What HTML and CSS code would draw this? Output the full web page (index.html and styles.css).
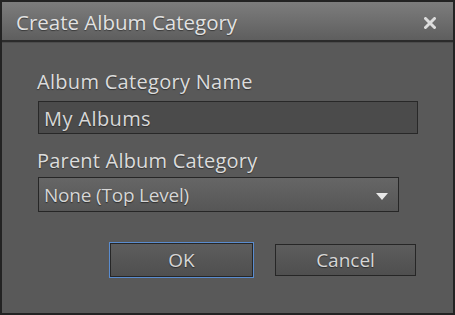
FILE: index.html
```html
<!DOCTYPE html>
<html lang="en">
<head>
    <meta charset="UTF-8">
    <meta name="viewport" content="width=device-width, initial-scale=1.0">
    <title>Create Album Category</title>
    <link rel="stylesheet" href="styles.css">
</head>
<body>
    <div class="dialog">
        <div class="titlebar">
            <span class="title">Create Album Category</span>
            <svg class="close" width="12" height="12" viewBox="0 0 12 12">
                <path d="M1.5 1.5 L10.5 10.5 M10.5 1.5 L1.5 10.5" stroke="#dcdcdc" stroke-width="3" stroke-linecap="round"/>
            </svg>
        </div>
        <div class="content">
            <label class="label" for="name">Album Category Name</label>
            <div class="field" id="name">My Albums</div>

            <label class="label label-parent" for="parent">Parent Album Category</label>
            <div class="select" id="parent">
                <span>None (Top Level)</span>
                <svg class="arrow" width="12" height="7" viewBox="0 0 12 7">
                    <path d="M0 0 L12 0 L6 7 Z" fill="#e8e8e8"/>
                </svg>
            </div>

            <div class="buttons">
                <div class="btn btn-default">OK</div>
                <div class="btn">Cancel</div>
            </div>
        </div>
    </div>
</body>
</html>
```

FILE: styles.css
```css
body {
    margin: 0;
    padding: 0;
    background-color: #1e1e1e;
    font-family: "Open Sans", "DejaVu Sans", sans-serif;
}
.dialog {
    width: 451px;
    height: 311px;
    border: 2px solid #232323;
    background-color: #595959;
    display: flex;
    flex-direction: column;
}
.titlebar {
    height: 38px;
    background: linear-gradient(#7d7d7d, #5e5e5e);
    border-bottom: 2px solid #2b2b2b;
    display: flex;
    align-items: center;
    justify-content: space-between;
    padding: 0 17px 0 14px;
}
.title {
    color: #e2e2e2;
    font-size: 20.5px;
    line-height: 24px;
    margin-top: 1px;
    text-shadow: 0 1px 1px #3a3a3a;
}
.close {
    margin-top: 3px;
}
.content {
    flex: 1;
    padding: 27px 0 0 36px;
    display: flex;
    flex-direction: column;
    border-top: 1px solid #4c4c4c;
}
.label {
    display: block;
    color: #dcdcdc;
    font-size: 20px;
    line-height: 24px;
    letter-spacing: 0.3px;
    text-shadow: 0 1px 1px #333333;
    margin-left: -1px;
}
.label-parent {
    letter-spacing: 0.2px;
}
.field {
    margin-top: 7px;
    margin-bottom: 15px;
    width: 380px;
    height: 33px;
    box-sizing: border-box;
    border: 1px solid #282828;
    background-color: #4b4b4b;
    color: #d8d8d8;
    font-size: 20px;
    letter-spacing: 0.4px;
    padding: 1px 0 0 5px;
    display: flex;
    align-items: center;
    text-shadow: 0 1px 1px #2e2e2e;
}
.select {
    margin-top: 4px;
    width: 361px;
    height: 35px;
    box-sizing: border-box;
    border: 1px solid #262626;
    background: linear-gradient(#666666, #565656);
    color: #d6d6d6;
    font-size: 19px;
    letter-spacing: -0.2px;
    padding: 0 10px 0 5px;
    display: flex;
    align-items: center;
    justify-content: space-between;
    text-shadow: 0 1px 1px #2e2e2e;
}
.arrow {
    margin-top: 3px;
}
.buttons {
    display: flex;
    align-items: center;
    gap: 22px;
    margin-top: 31px;
    margin-left: 72px;
}
.btn {
    width: 141px;
    height: 32px;
    box-sizing: border-box;
    border: 1px solid #262626;
    background: linear-gradient(#5d5d5d, #4f4f4f);
    color: #d6d6d6;
    font-size: 19px;
    display: flex;
    align-items: center;
    justify-content: center;
    text-shadow: 0 1px 1px #2e2e2e;
}
.btn-default {
    width: 143px;
    height: 34px;
    box-shadow: 0 0 0 1px #5a8ccf;
}
```
